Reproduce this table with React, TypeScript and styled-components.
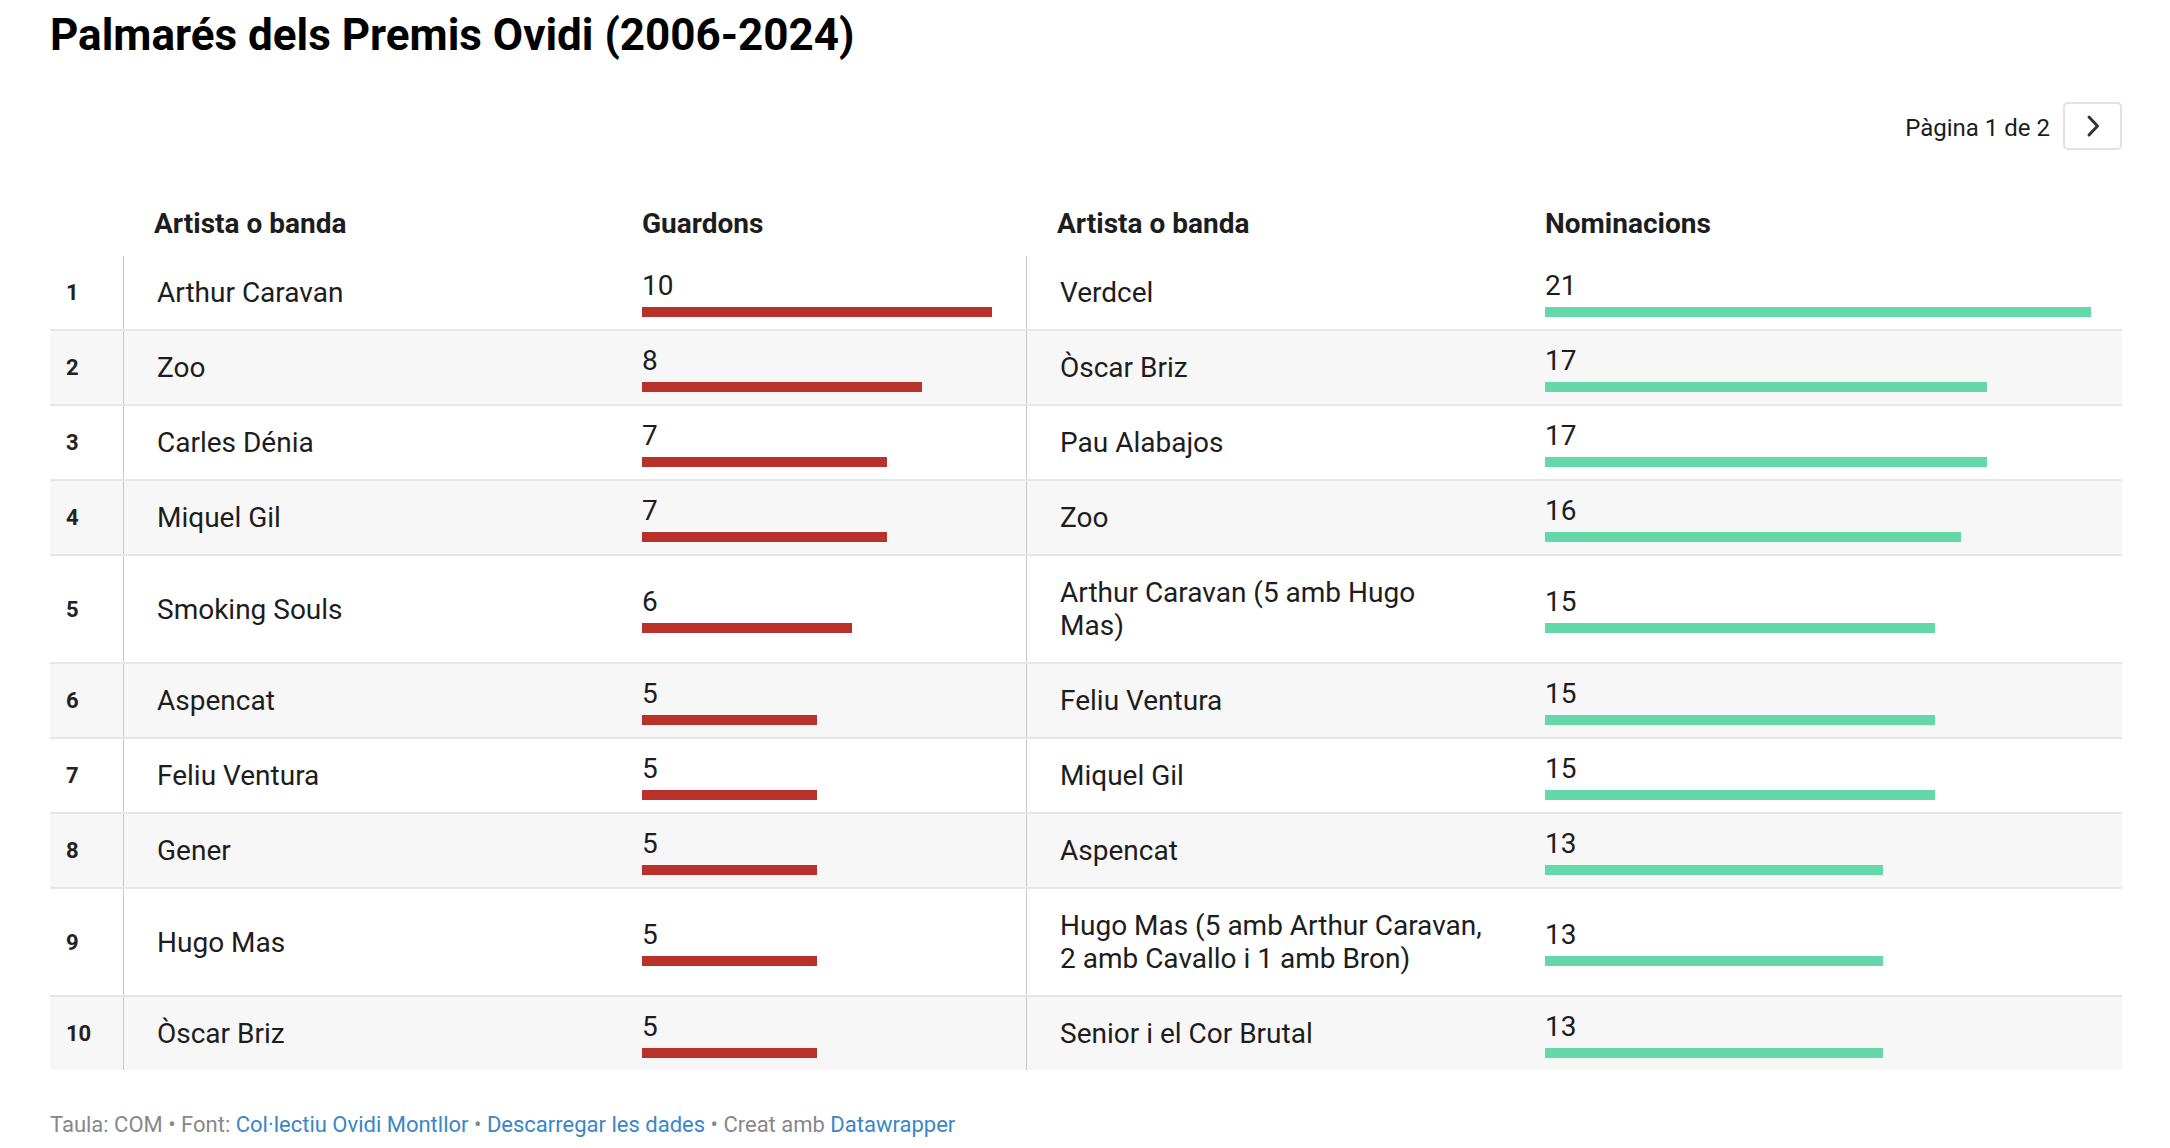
import React from 'react';
import styled, { createGlobalStyle } from 'styled-components';

type Row = {
  rank: number;
  artist: string[];
  awards: number;
  nominee: string[];
  nominations: number;
};

const ROWS: Row[] = [
  { rank: 1, artist: ['Arthur Caravan'], awards: 10, nominee: ['Verdcel'], nominations: 21 },
  { rank: 2, artist: ['Zoo'], awards: 8, nominee: ['Òscar Briz'], nominations: 17 },
  { rank: 3, artist: ['Carles Dénia'], awards: 7, nominee: ['Pau Alabajos'], nominations: 17 },
  { rank: 4, artist: ['Miquel Gil'], awards: 7, nominee: ['Zoo'], nominations: 16 },
  { rank: 5, artist: ['Smoking Souls'], awards: 6, nominee: ['Arthur Caravan (5 amb Hugo', 'Mas)'], nominations: 15 },
  { rank: 6, artist: ['Aspencat'], awards: 5, nominee: ['Feliu Ventura'], nominations: 15 },
  { rank: 7, artist: ['Feliu Ventura'], awards: 5, nominee: ['Miquel Gil'], nominations: 15 },
  { rank: 8, artist: ['Gener'], awards: 5, nominee: ['Aspencat'], nominations: 13 },
  {
    rank: 9,
    artist: ['Hugo Mas'],
    awards: 5,
    nominee: ['Hugo Mas (5 amb Arthur Caravan,', '2 amb Cavallo i 1 amb Bron)'],
    nominations: 13,
  },
  { rank: 10, artist: ['Òscar Briz'], awards: 5, nominee: ['Senior i el Cor Brutal'], nominations: 13 },
];

// px per unit, max value fills the column like in the original chart
const AWARD_UNIT = 35;
const NOMINATION_UNIT = 26;

const GlobalStyle = createGlobalStyle`
  html, body {
    margin: 0;
    padding: 0;
    background: #ffffff;
  }
  body {
    font-family: Roboto, "Liberation Sans", Arial, sans-serif;
    color: #1d1d1d;
  }
`;

const Lines: React.FC<{ lines: string[] }> = ({ lines }) => (
  <>
    {lines.map((l, i) => (
      <React.Fragment key={i}>
        {i > 0 && <br />}
        {l}
      </React.Fragment>
    ))}
  </>
);

const ChevronRight = () => (
  <svg width="16" height="24" viewBox="0 0 16 24" fill="none">
    <polyline
      points="4,3 12.5,12 4,21"
      stroke="#333333"
      strokeWidth="3"
      strokeLinecap="round"
      strokeLinejoin="round"
    />
  </svg>
);

export default function App() {
  return (
    <>
      <GlobalStyle />
      <Page>
        <Title>Palmarés dels Premis Ovidi (2006-2024)</Title>

        <Pagination>
          <PageLabel>Pàgina 1 de 2</PageLabel>
          <PageButton type="button" aria-label="Pàgina següent">
            <ChevronRight />
          </PageButton>
        </Pagination>

        <Table>
          <HeaderRow>
            <HeadCell />
            <HeadCell $indent>Artista o banda</HeadCell>
            <HeadCell>Guardons</HeadCell>
            <HeadCell $indent>Artista o banda</HeadCell>
            <HeadCell>Nominacions</HeadCell>
          </HeaderRow>

          {ROWS.map((row, i) => (
            <BodyRow key={row.rank} $striped={i % 2 === 1} $last={i === ROWS.length - 1}>
              <RankCell>{row.rank}</RankCell>
              <NameCell $divider>
                <Lines lines={row.artist} />
              </NameCell>
              <BarCell>
                <BarValue>{row.awards}</BarValue>
                <Bar $color="#b8322b" style={{ width: row.awards * AWARD_UNIT }} />
              </BarCell>
              <NameCell $divider>
                <Lines lines={row.nominee} />
              </NameCell>
              <BarCell>
                <BarValue>{row.nominations}</BarValue>
                <Bar $color="#64d8a9" style={{ width: row.nominations * NOMINATION_UNIT }} />
              </BarCell>
            </BodyRow>
          ))}
        </Table>

        <Footer>
          Taula: COM • Font: <FooterLink>Col·lectiu Ovidi Montllor</FooterLink> •{' '}
          <FooterLink>Descarregar les dades</FooterLink> • Creat amb <FooterLink>Datawrapper</FooterLink>
        </Footer>
      </Page>
    </>
  );
}

const Page = styled.div`
  padding: 9px 48px 0 50px;
`;

const Title = styled.h1`
  margin: 0;
  font-size: 44px;
  line-height: 53px;
  font-weight: 700;
  color: #000000;
`;

const Pagination = styled.div`
  display: flex;
  justify-content: flex-end;
  align-items: center;
  gap: 13px;
  margin-top: 40px;
`;

const PageLabel = styled.span`
  font-size: 24px;
  line-height: 28px;
  padding-top: 3px;
  color: #1d1d1d;
`;

const PageButton = styled.button`
  display: flex;
  align-items: center;
  justify-content: center;
  width: 59px;
  height: 48px;
  padding: 0;
  background: #ffffff;
  border: 2px solid #e2e2e2;
  border-radius: 5px;
  cursor: pointer;
`;

const Table = styled.div`
  margin-top: 57px;
  display: flex;
  flex-direction: column;
`;

const columns = `73px 519px 384px 519px 1fr`;

const HeaderRow = styled.div`
  display: grid;
  grid-template-columns: ${columns};
  padding-bottom: 16px;
`;

const HeadCell = styled.div<{ $indent?: boolean }>`
  font-size: 28px;
  line-height: 33px;
  font-weight: 700;
  color: #1d1d1d;
  padding-left: ${(p) => (p.$indent ? '31px' : '0')};
`;

const BodyRow = styled.div<{ $striped: boolean; $last: boolean }>`
  display: grid;
  grid-template-columns: ${columns};
  min-height: 73px;
  background: ${(p) => (p.$striped ? '#f7f7f7' : '#ffffff')};
  border-bottom: ${(p) => (p.$last ? 'none' : '2px solid #e7e7e7')};
`;

const RankCell = styled.div`
  display: flex;
  align-items: center;
  padding-left: 16px;
  font-size: 22px;
  font-weight: 700;
  color: #222222;
`;

const NameCell = styled.div<{ $divider?: boolean }>`
  display: flex;
  align-items: center;
  padding: 20px 16px 20px 33px;
  font-size: 28px;
  line-height: 33px;
  border-left: ${(p) => (p.$divider ? '1px solid #c9c9c9' : 'none')};
`;

const BarCell = styled.div`
  display: flex;
  flex-direction: column;
  justify-content: center;
  padding: 12px 0;
`;

const BarValue = styled.div`
  font-size: 28px;
  line-height: 33px;
`;

const Bar = styled.div<{ $color: string }>`
  height: 10px;
  margin-top: 5px;
  background: ${(p) => p.$color};
`;

const Footer = styled.div`
  margin-top: 42px;
  font-size: 22px;
  line-height: 26px;
  color: #888888;
`;

const FooterLink = styled.a`
  color: #3a86c8;
  text-decoration: none;
  cursor: pointer;
`;
